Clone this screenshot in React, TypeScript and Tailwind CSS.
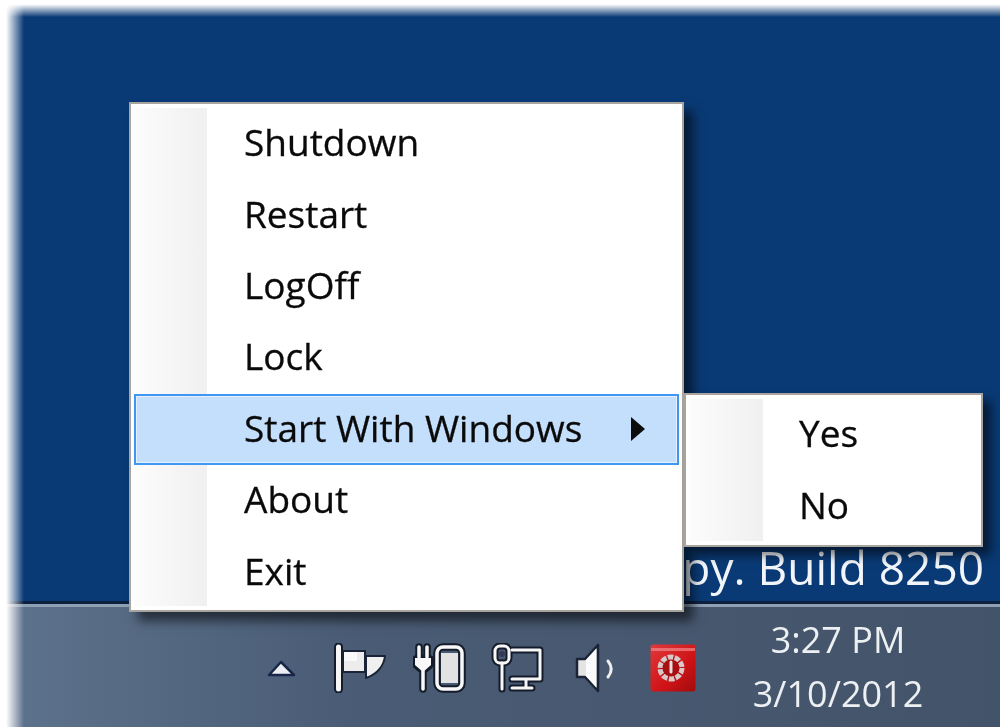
const FONT = "font-['Open_Sans','Noto_Sans',sans-serif]";

const ITEMS = ["Shutdown", "Restart", "LogOff", "Lock", "Start With Windows", "About", "Exit"];

function TrayIcons() {
  return (
    <div className="flex items-center blur-[0.7px]">
      {/* show hidden icons */}
      <svg width="30" height="20" viewBox="0 0 30 20" className="mr-[36px]">
        <path d="M2 17 L14 4 L27 17 Z" fill="#eceef4" stroke="#18264a" strokeWidth="2.5" strokeLinejoin="round" />
      </svg>
      {/* action center flag */}
      <svg width="54" height="50" viewBox="0 0 54 50" className="mr-[26px]">
        <path d="M5.5 4 V46" stroke="#141c2c" strokeWidth="9" strokeLinecap="round" />
        <path d="M5.5 4 V46" stroke="#f6f6f6" strokeWidth="5" strokeLinecap="round" />
        <path d="M10 8 H32 V29 H10 Z" fill="#ececec" stroke="#1a2436" strokeWidth="2" />
        <path d="M11 9 H24 V18 H11 Z" fill="#fafafa" />
        <path d="M33 13 H52 C51 22 45 31 33 35 Z" fill="#f0f0f0" stroke="#1a2436" strokeWidth="2" strokeLinejoin="round" />
      </svg>
      {/* power */}
      <svg width="54" height="50" viewBox="0 0 54 50" className="mr-[23px]">
        <g fill="none" strokeLinecap="round" strokeLinejoin="round">
          <g stroke="#141c2c" strokeWidth="7.5">
            <path d="M6 4 V14 M14 4 V14 M3 16 H17 V22 L10 28 L3 22 Z M10 28 V46" />
            <rect x="24" y="4" width="25" height="42" rx="6" />
          </g>
          <g stroke="#f8f8f8" strokeWidth="3.5">
            <path d="M6 4 V14 M14 4 V14 M10 28 V46" />
            <rect x="24" y="4" width="25" height="42" rx="6" />
          </g>
          <path d="M2 15 H18 V22 L10 29 L2 22 Z" fill="#f8f8f8" stroke="none" />
          <rect x="28" y="10" width="17" height="30" fill="#e2e2e2" stroke="none" />
        </g>
      </svg>
      {/* network */}
      <svg width="54" height="50" viewBox="0 0 54 50" className="mr-[31px]">
        <g fill="none" strokeLinejoin="round" strokeLinecap="round">
          <g stroke="#141c2c" strokeWidth="7">
            <path d="M22 7 H50 V36 H22 M36 36 V44 M22 45 H42" />
            <rect x="5" y="3" width="14" height="17" rx="5" />
            <path d="M12 20 V46" />
          </g>
          <g stroke="#f6f6f6" strokeWidth="3">
            <path d="M22 7 H50 V36 H22 M36 36 V44 M22 45 H42" />
            <rect x="5" y="3" width="14" height="17" rx="5" />
            <path d="M12 20 V46" />
          </g>
          <circle cx="12" cy="11" r="3" fill="#343a52" stroke="none" />
        </g>
      </svg>
      {/* speaker */}
      <svg width="44" height="50" viewBox="0 0 44 50" className="mr-[31px]">
        <path d="M2 16 H10 L23 2 V48 L10 34 H2 Z" fill="#e4e4e4" stroke="#1a2436" strokeWidth="2.5" strokeLinejoin="round" />
        <path d="M11 17 L21 6 V44 L11 33 Z" fill="#fbfbfb" />
        <path d="M33 18 C37 23 37 29 33 34" fill="none" stroke="#eeeeee" strokeWidth="3" strokeLinecap="round" />
      </svg>
      {/* shutdown app */}
      <svg width="46" height="48" viewBox="0 0 46 48">
        <defs>
          <linearGradient id="redBox" x1="0" y1="0" x2="1" y2="1">
            <stop offset="0" stopColor="#e0393c" />
            <stop offset="0.6" stopColor="#cf1316" />
            <stop offset="1" stopColor="#a00c0e" />
          </linearGradient>
        </defs>
        <rect x="0.5" y="0.5" width="45" height="47" rx="3" fill="url(#redBox)" />
        <rect x="1" y="4" width="44" height="3" fill="#ee8a8a" opacity="0.7" />
        <circle cx="21" cy="24" r="11" fill="#a80f12" stroke="#d8c8c8" strokeWidth="5" strokeDasharray="5.5 1.4" />
        <path d="M21 18 V28" stroke="#e8dcdc" strokeWidth="3" strokeLinecap="round" />
      </svg>
    </div>
  );
}

export default function App() {
  return (
    <div className={`${FONT} relative flex h-[727px] w-[1000px] flex-col overflow-hidden bg-white pl-[5px] pt-[4px]`}>
      {/* desktop */}
      <div className="flex h-[597px] items-end justify-end bg-[#0a3a75] pb-[7px] pr-[16px] blur-[0.5px]">
        <span className="whitespace-nowrap text-[46px] leading-[54px] text-[#f2f6fb]">Evaluation copy. Build 8250</span>
      </div>
      <div className="h-[3px] bg-[#0c2140]" />
      <div className="h-[3px] bg-[#8f9fb4]" />

      {/* taskbar */}
      <div className="flex flex-1 items-center justify-end bg-gradient-to-r from-[#5d728c] via-[#4a5c75] via-35% to-[#435369] pl-[250px] pr-[67px]">
        <div className="mt-[1px] flex flex-1 justify-start pl-[12px]">
          <TrayIcons />
        </div>
        <div className="flex w-[190px] flex-col items-center text-[36px] leading-[54px] text-[#edf0f3] blur-[0.5px]">
          <span>3:27 PM</span>
          <span>3/10/2012</span>
        </div>
      </div>

      {/* window edge fade */}
      <div className="absolute inset-y-0 left-0 w-[24px] bg-gradient-to-r from-white from-25% to-transparent" />
      <div className="absolute inset-x-0 top-0 h-[17px] bg-gradient-to-b from-white from-25% to-transparent" />

      {/* main context menu */}
      <div className="absolute left-[129px] top-[102px] h-[510px] w-[555px] border-2 border-[#a8a4a0] bg-white p-[4px] shadow-[9px_9px_10px_rgba(0,0,0,0.55)]">
        <div className="absolute bottom-[4px] left-[4px] top-[4px] w-[72px] bg-gradient-to-r from-[#fcfcfc] to-[#f0f0f0]" />
        <div className="relative flex flex-col">
          {ITEMS.map((label) => {
            const active = label === "Start With Windows";
            return (
              <div
                key={label}
                className={
                  active
                    ? "-mx-[1px] flex h-[71.4px] items-center justify-between border-2 border-[#3f97f2] bg-[#c4dffb] pb-[4px] pl-[108px] pr-[31px] shadow-[inset_0_0_0_1px_#e4f0fd]"
                    : "flex h-[71.4px] items-center pb-[4px] pl-[109px]"
                }
              >
                <span className="text-[37px] leading-none text-[#0a0a0a] blur-[0.3px] [-webkit-text-stroke:0.3px_#0a0a0a]">{label}</span>
                {active && (
                  <svg width="16" height="26" viewBox="0 0 16 26" className="mt-[4px]">
                    <path d="M1 1 L15 13 L1 25 Z" fill="#0c0c0c" />
                  </svg>
                )}
              </div>
            );
          })}
        </div>
      </div>

      {/* submenu */}
      <div className="absolute left-[684px] top-[393px] h-[154px] w-[299px] border-2 border-[#a8a4a0] bg-white p-[4px] shadow-[8px_8px_10px_rgba(0,0,0,0.55)]">
        <div className="absolute bottom-[4px] left-[4px] top-[4px] w-[73px] bg-gradient-to-r from-[#fcfcfc] to-[#f0f0f0]" />
        <div className="relative flex flex-col">
          {["Yes", "No"].map((label) => (
            <div key={label} className="flex h-[71.4px] items-center pb-[4px] pl-[109px]">
              <span className="text-[37px] leading-none text-[#0a0a0a] blur-[0.3px] [-webkit-text-stroke:0.3px_#0a0a0a]">{label}</span>
            </div>
          ))}
        </div>
      </div>
    </div>
  );
}
